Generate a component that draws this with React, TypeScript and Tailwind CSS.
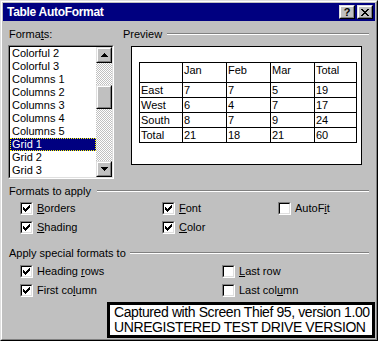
import * as React from "react";

const FORMATS = [
  "Colorful 2",
  "Colorful 3",
  "Columns 1",
  "Columns 2",
  "Columns 3",
  "Columns 4",
  "Columns 5",
  "Grid 1",
  "Grid 2",
  "Grid 3",
];

const PREVIEW = [
  ["", "Jan", "Feb", "Mar", "Total"],
  ["East", "7", "7", "5", "19"],
  ["West", "6", "4", "7", "17"],
  ["South", "8", "7", "9", "24"],
  ["Total", "21", "18", "21", "60"],
];

const COL_W = ["w-[43px]", "w-[44px]", "w-[44px]", "w-[44px]", "w-[42px]"];

// 1-bit glyphs, drawn pixel by pixel like the Win95 bitmaps
const CHECK = ["......#", ".....##", "#...###", "##.###.", "#####..", ".###...", "..#...."];
const CLOSE = ["##....##", ".##..##.", "..####..", "...##...", "..####..", ".##..##.", "##....##"];

function Bits({ rows }: { rows: string[] }) {
  const w = rows[0].length;
  const h = rows.length;
  return (
    <svg width={w} height={h} viewBox={`0 0 ${w} ${h}`} shapeRendering="crispEdges">
      {rows.flatMap((r, y) =>
        [...r].map((c, x) =>
          c === "#" ? <rect key={`${x}-${y}`} x={x} y={y} width="1" height="1" fill="#000" /> : null,
        ),
      )}
    </svg>
  );
}

function Arrow({ down }: { down?: boolean }) {
  return (
    <svg width="7" height="4" viewBox="0 0 7 4" shapeRendering="crispEdges">
      <path d={down ? "M0 0h7v1H0zM1 1h5v1H1zM2 2h3v1H2zM3 3h1v1H3z" : "M3 0h1v1H3zM2 1h3v1H2zM1 2h5v1H1zM0 3h7v1H0z"} fill="#000" />
    </svg>
  );
}

function Raised({ className, children }: { className?: string; children?: React.ReactNode }) {
  return (
    <div className={"border border-t-[#dfdfdf] border-l-[#dfdfdf] border-r-black border-b-black " + (className ?? "")}>
      <div className="h-full w-full border border-t-white border-l-white border-r-[#808080] border-b-[#808080] bg-[#c0c0c0] flex items-center justify-center">
        {children}
      </div>
    </div>
  );
}

function Sunken({ className, children }: { className?: string; children?: React.ReactNode }) {
  return (
    <div className={"border border-t-[#808080] border-l-[#808080] border-r-white border-b-white " + (className ?? "")}>
      <div className="h-full w-full border border-t-black border-l-black border-r-[#dfdfdf] border-b-[#dfdfdf] flex">
        {children}
      </div>
    </div>
  );
}

function Check({ checked, children }: { checked?: boolean; children: React.ReactNode }) {
  return (
    <div className="flex items-center h-[19px]">
      <Sunken className="w-[13px] h-[13px] shrink-0">
        <div className="flex-1 bg-white flex items-center justify-center">
          {checked && <Bits rows={CHECK} />}
        </div>
      </Sunken>
      <span className="ml-[4px] text-[11px] leading-[13px] text-black">{children}</span>
    </div>
  );
}

function GroupLabel({ label, width }: { label: string; width: string }) {
  return (
    <div className="ml-[1px] flex items-start h-[13px]">
      <span className={"text-[11px] leading-[13px] shrink-0 " + width}>{label}</span>
      <div className="flex-1 mt-[5px] h-[2px] border-t border-t-[#808080] border-b border-b-white" />
    </div>
  );
}

function u(s: string) {
  return <span className="underline underline-offset-[1px] decoration-1">{s}</span>;
}

export default function App() {
  return (
    <div className="relative w-[378px] h-[341px] overflow-hidden bg-[#c0c0c0] font-['Liberation_Sans',Arial,sans-serif] text-black">
      <div className="h-full w-full border border-t-[#dfdfdf] border-l-[#dfdfdf] border-r-black border-b-black">
        <div className="h-full w-full border border-t-white border-l-white border-r-[#808080] border-b-[#808080] p-[1px]">
          {/* title bar */}
          <div className="h-[18px] bg-[#000080] flex items-center pl-[4px] pr-[2px]">
            <span className="text-white font-bold text-[12px] tracking-[-0.3px] leading-[18px]">Table AutoFormat</span>
            <div className="ml-auto flex gap-[2px]">
              <Raised className="w-[16px] h-[14px]">
                <span className="font-bold text-[11px] leading-[10px] text-black">?</span>
              </Raised>
              <Raised className="w-[16px] h-[14px]">
                <Bits rows={CLOSE} />
              </Raised>
            </div>
          </div>

          <div className="pl-[5px] pr-[6px]">
            <div className="flex">
              {/* formats list */}
              <div className="w-[106px] flex flex-col">
                <div className="mt-[7px] ml-[1px] h-[13px] text-[11px] leading-[13px]">
                  Forma{u("t")}s:
                </div>
                <Sunken className="mt-[4px] h-[134px]">
                  <div className="flex-1 bg-white">
                    {FORMATS.map((f) =>
                      f === "Grid 1" ? (
                        <div
                          key={f}
                          className="h-[13px] leading-[11px] pl-[1px] text-[11px] text-white bg-[#000080] border border-dotted border-[#ffff00]"
                        >
                          {f}
                        </div>
                      ) : (
                        <div key={f} className="h-[13px] leading-[13px] pl-[2px] text-[11px]">
                          {f}
                        </div>
                      ),
                    )}
                  </div>
                  <div className="w-[16px] flex flex-col">
                    <Raised className="h-[16px]">
                      <Arrow />
                    </Raised>
                    <div className="flex-1 bg-[repeating-conic-gradient(#c0c0c0_0_25%,#ffffff_0_50%)] bg-[length:2px_2px] pt-[22px]">
                      <Raised className="h-[24px]" />
                    </div>
                    <Raised className="h-[16px]">
                      <Arrow down />
                    </Raised>
                  </div>
                </Sunken>
              </div>

              {/* preview */}
              <div className="ml-[8px] flex-1 flex flex-col">
                <div className="mt-[7px]">
                  <GroupLabel label="Preview" width="w-[44px]" />
                </div>
                <div className="ml-[9px] mt-[5px] w-[231px] h-[119px] bg-white border border-black">
                  <div className="ml-[7px] mt-[15px] w-[218px] border-l border-t border-black">
                    {PREVIEW.map((row, ri) => (
                      <div key={ri} className={"flex " + (ri === 0 ? "h-[20px]" : "h-[15px]")}>
                        {row.map((c, ci) => (
                          <div
                            key={ci}
                            className={
                              "border-r border-b border-black pl-[1px] text-[11px] leading-[14px] " + COL_W[ci]
                            }
                          >
                            {c}
                          </div>
                        ))}
                      </div>
                    ))}
                  </div>
                </div>
              </div>
            </div>

            {/* formats to apply */}
            <div className="mt-[6px]">
              <GroupLabel label="Formats to apply" width="w-[88px]" />
            </div>
            <div className="ml-[12px] mt-[1px]">
              <div className="flex">
                <div className="w-[142px]">
                  <Check checked>{u("B")}orders</Check>
                </div>
                <div className="w-[116px]">
                  <Check checked>{u("F")}ont</Check>
                </div>
                <Check>AutoF{u("i")}t</Check>
              </div>
              <div className="flex">
                <div className="w-[142px]">
                  <Check checked>{u("S")}hading</Check>
                </div>
                <Check checked>{u("C")}olor</Check>
              </div>
            </div>

            {/* special formats */}
            <div className="mt-[10px]">
              <GroupLabel label="Apply special formats to" width="w-[121px]" />
            </div>
            <div className="ml-[12px] mt-[2px]">
              <div className="flex">
                <div className="w-[202px]">
                  <Check checked>Heading {u("r")}ows</Check>
                </div>
                <Check>{u("L")}ast row</Check>
              </div>
              <div className="flex">
                <div className="w-[202px]">
                  <Check checked>First co{u("l")}umn</Check>
                </div>
                <Check>Last col{u("u")}mn</Check>
              </div>
            </div>
          </div>
        </div>
      </div>

      {/* capture watermark laid over the dialog */}
      <div className="absolute left-[107px] top-[302px] w-[268px] h-[36px] bg-white border-[3px] border-black pl-[4px] text-[14px] leading-[15px] tracking-[-0.4px]">
        <div>Captured with Screen Thief 95, version 1.00</div>
        <div>UNREGISTERED TEST DRIVE VERSION</div>
      </div>
    </div>
  );
}
